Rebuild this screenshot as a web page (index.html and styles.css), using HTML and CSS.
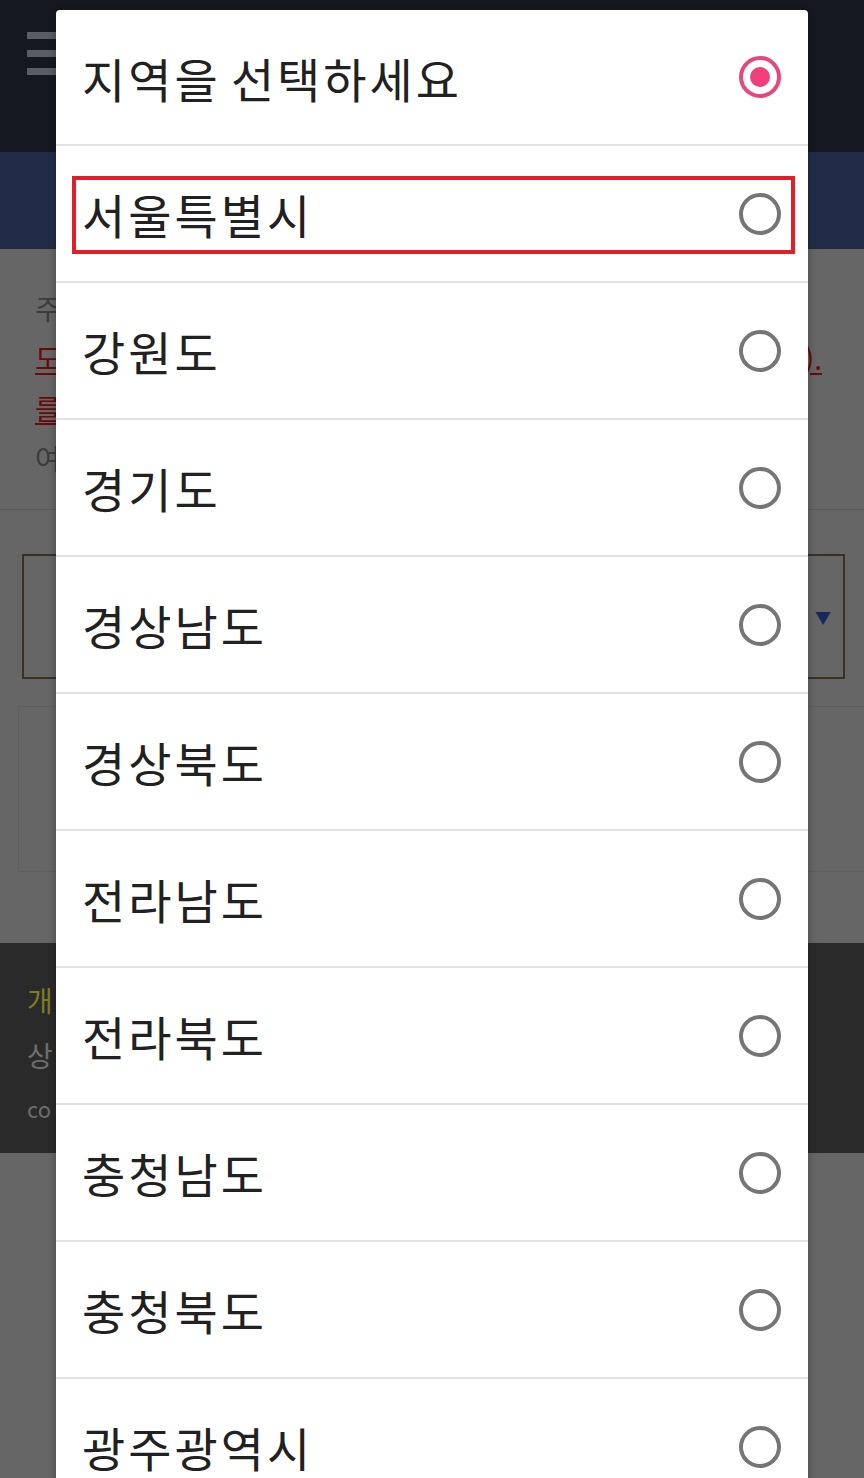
FILE: index.html
```html
<!DOCTYPE html>
<html lang="ko">
<head>
<meta charset="utf-8">
<title>지역 선택</title>
<link rel="stylesheet" href="styles.css">
</head>
<body>
<div class="page">
  <header class="topbar">
    <div class="burger"><span></span><span></span><span></span></div>
  </header>
  <div class="band"></div>
  <main class="content">
    <div class="notice">
      <p class="line gray"><span>주</span><span></span></p>
      <p class="line red"><span class="u">도</span><span class="u">).</span></p>
      <p class="line red"><span class="u">를</span><span class="dark"></span></p>
      <p class="line gray"><span>여</span><span></span></p>
    </div>
    <div class="rule"></div>
    <div class="select"><span class="arrow">▼</span></div>
    <div class="box"></div>
  </main>
  <footer class="footer">
    <p class="f1">개</p>
    <p class="f2">상</p>
    <p class="f3">co</p>
  </footer>
  <div class="rest"></div>
</div>

<div class="dialog">
  <div class="row">
    <span class="label">지역을 선택하세요</span>
    <span class="radio on"></span>
  </div>
  <div class="row">
    <span class="mark"></span>
    <span class="label">서울특별시</span>
    <span class="radio"></span>
  </div>
  <div class="row"><span class="label">강원도</span><span class="radio"></span></div>
  <div class="row"><span class="label">경기도</span><span class="radio"></span></div>
  <div class="row"><span class="label">경상남도</span><span class="radio"></span></div>
  <div class="row"><span class="label">경상북도</span><span class="radio"></span></div>
  <div class="row"><span class="label">전라남도</span><span class="radio"></span></div>
  <div class="row"><span class="label">전라북도</span><span class="radio"></span></div>
  <div class="row"><span class="label">충청남도</span><span class="radio"></span></div>
  <div class="row"><span class="label">충청북도</span><span class="radio"></span></div>
  <div class="row"><span class="label">광주광역시</span><span class="radio"></span></div>
</div>
</body>
</html>
```

FILE: styles.css
```css
html, body {
  margin: 0;
  padding: 0;
}
body {
  width: 864px;
  height: 1478px;
  overflow: hidden;
  position: relative;
  font-family: "Noto Sans CJK KR", "Noto Sans", sans-serif;
  background: #666666;
}
.page {
  display: flex;
  flex-direction: column;
}
.topbar {
  height: 152px;
  background: #15181f;
  box-sizing: border-box;
  padding: 32px 0 0 27px;
}
.burger {
  display: flex;
  flex-direction: column;
  gap: 11px;
  width: 40px;
}
.burger span {
  display: block;
  height: 7px;
  background: #5a5d63;
}
.band {
  height: 96px;
  background: #212c48;
  border-bottom: 1px solid #2a2a2a;
}
.content {
  height: 694px;
  background: #666666;
  box-sizing: border-box;
  padding-top: 34px;
  display: flex;
  flex-direction: column;
}
.notice {
  padding: 0 42px 0 35px;
}
.line {
  margin: 0;
  height: 50px;
  font-size: 28px;
  line-height: 50px;
  display: flex;
  justify-content: space-between;
  align-items: center;
}
.gray { color: #3c3c3c; }
.red { color: #6a0a0a; }
.u { text-decoration: underline; text-underline-offset: 3px; }
.dark {
  width: 3px;
  height: 28px;
  background: #111;
  margin-right: 14px;
}
.rule {
  margin-top: 26px;
  height: 1px;
  background: #5a5a5a;
}
.select {
  margin: 44px 19px 0 22px;
  height: 125px;
  box-sizing: border-box;
  border: 2px solid #3a3220;
  display: flex;
  align-items: center;
  justify-content: flex-end;
  padding-right: 12px;
}
.arrow {
  color: #17285a;
  font-size: 16px;
}
.box {
  margin: 27px 0 0 18px;
  height: 164px;
  border: 1px solid #5e5e5e;
  border-right: none;
}
.footer {
  height: 210px;
  background: #2a2a2a;
  box-sizing: border-box;
  padding: 30px 0 0 27px;
}
.footer p {
  margin: 0;
  line-height: 55px;
}
.f1 { color: #7f7c26; font-size: 28px; }
.f2 { color: #6e6e6e; font-size: 28px; }
.f3 { color: #6e6e6e; font-size: 22px; line-height: 50px !important; }
.rest {
  flex: 1;
  background: #666666;
}

.dialog {
  position: absolute;
  left: 56px;
  top: 10px;
  width: 752px;
  background: #ffffff;
  border-radius: 4px;
  box-shadow: 0 2px 8px rgba(0, 0, 0, 0.3);
  display: flex;
  flex-direction: column;
}
.row {
  position: relative;
  height: 135px;
  border-bottom: 2px solid #e2e2e2;
  display: flex;
  align-items: center;
  justify-content: space-between;
  padding: 0 27px 0 26px;
}
.row:first-child {
  height: 134px;
}
.label {
  font-size: 47px;
  color: #212121;
  letter-spacing: 3px;
  word-spacing: -6px;
}
.radio {
  width: 42px;
  height: 42px;
  box-sizing: border-box;
  border: 4px solid #757575;
  border-radius: 50%;
  display: flex;
  align-items: center;
  justify-content: center;
}
.radio.on {
  border-color: #e8467f;
}
.radio.on::after {
  content: "";
  width: 20px;
  height: 20px;
  border-radius: 50%;
  background: #f23e7b;
}
.mark {
  position: absolute;
  left: 16px;
  top: 30px;
  width: 723px;
  height: 78px;
  box-sizing: border-box;
  border: 4px solid #e31e26;
}
```
